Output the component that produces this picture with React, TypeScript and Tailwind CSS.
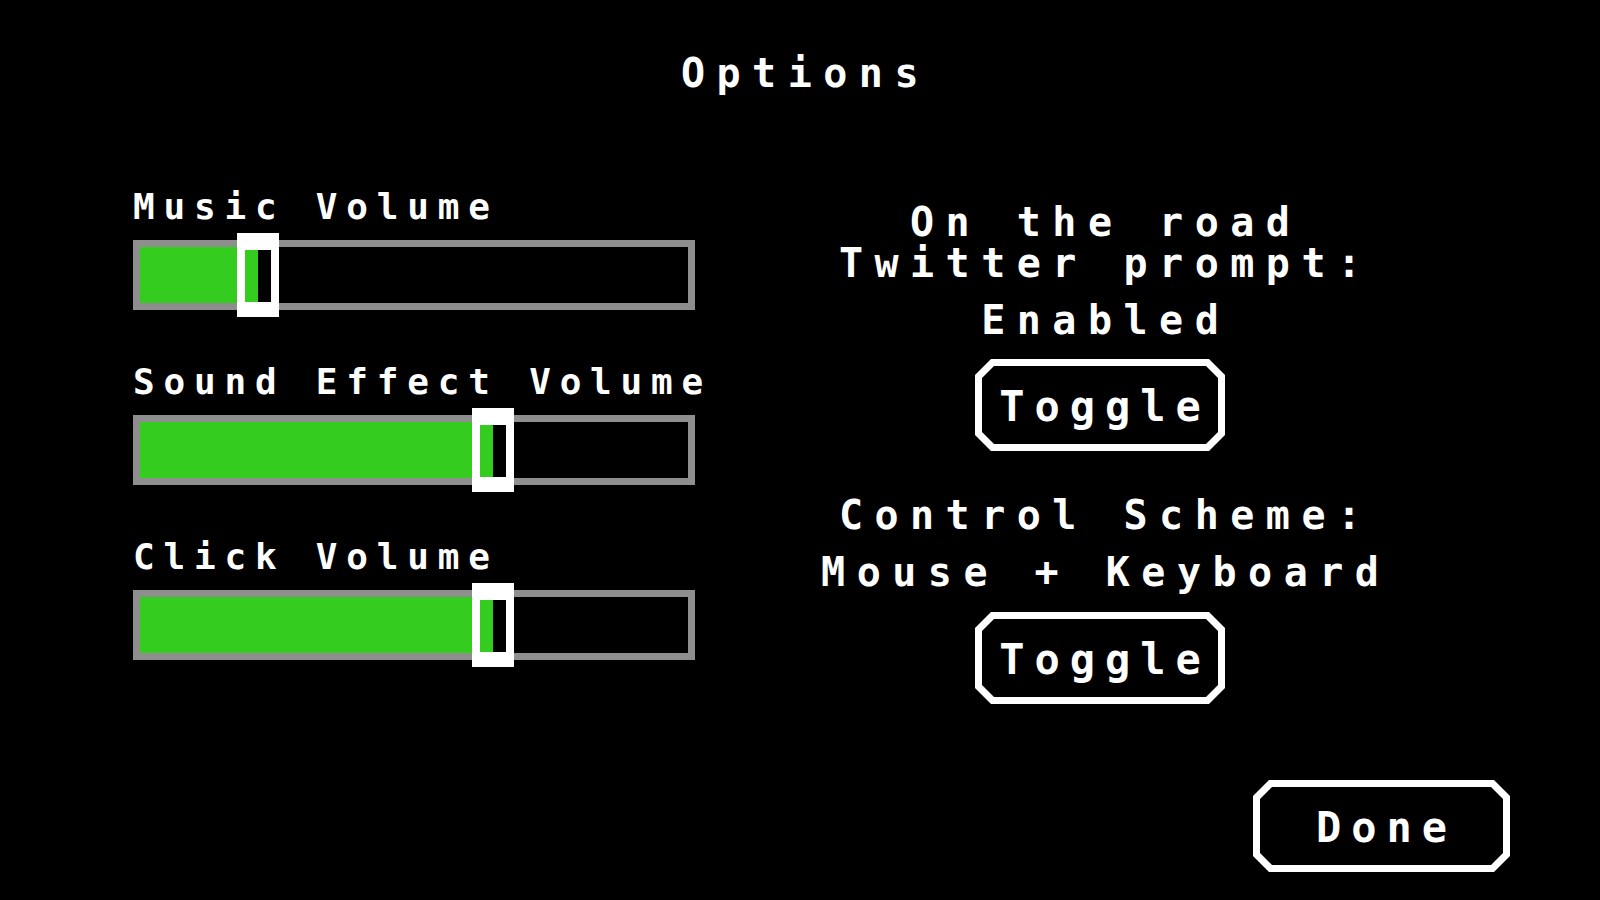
import React from "react";

const octagon =
  "[clip-path:polygon(16px_0,calc(100%-16px)_0,100%_16px,100%_calc(100%-16px),calc(100%-16px)_100%,16px_100%,0_calc(100%-16px),0_16px)]";
const octagonInner =
  "[clip-path:polygon(12px_0,calc(100%-12px)_0,100%_12px,100%_calc(100%-12px),calc(100%-12px)_100%,12px_100%,0_calc(100%-12px),0_12px)]";

function PixelButton({ label, width }: { label: string; width: string }) {
  return (
    <button className={`${octagon} ${width} h-[92px] bg-white p-[7px]`}>
      <div
        className={`${octagonInner} flex h-full w-full items-center justify-center bg-black pt-[4px] pl-[10px] text-[42px] leading-[42px] tracking-[10px] text-white`}
      >
        {label}
      </div>
    </button>
  );
}

function VolumeSlider({ label, value }: { label: string; value: number }) {
  return (
    <div className="flex flex-col">
      <div className="text-[36px] leading-[36px] tracking-[8.8px] whitespace-nowrap">{label}</div>
      <div className="relative mt-[15px] h-[70px] w-[562px] border-[7px] border-[#8e8e8e] bg-black">
        <div className="h-full bg-[#33cc1f]" style={{ width: `${value}%` }} />
        {/* hollow handle sitting on the end of the fill */}
        <div
          className="absolute top-[-14px] h-[84px] w-[42px] border-x-[8px] border-t-[17px] border-b-[15px] border-white"
          style={{ left: `calc(${value}% - 21px)` }}
        />
      </div>
    </div>
  );
}

export default function App() {
  return (
    <div
      className="flex h-[900px] w-full flex-col overflow-hidden bg-black font-bold text-white"
      style={{ fontFamily: '"DejaVu Sans Mono", "Liberation Mono", monospace' }}
    >
      <h1 className="pt-[53px] pl-[11px] text-center text-[40px] leading-[40px] tracking-[11.5px]">Options</h1>

      <div className="flex items-start">
        <div className="ml-[133px] mt-[96px] flex w-[562px] flex-col gap-[54px]">
          <VolumeSlider label="Music Volume" value={21.5} />
          <VolumeSlider label="Sound Effect Volume" value={64.4} />
          <VolumeSlider label="Click Volume" value={64.4} />
        </div>

        <div className="ml-[105px] mt-[109px] flex w-[600px] flex-col items-center text-[40px] tracking-[11.5px]">
          <div className="pl-[11.5px] text-center leading-[41px]">
            <div>On the road</div>
            <div>Twitter prompt:</div>
          </div>
          <div className="mt-[16px] pl-[11.5px] leading-[40px]">Enabled</div>
          <div className="mt-[19px]">
            <PixelButton label="Toggle" width="w-[250px]" />
          </div>
          <div className="mt-[44px] pl-[11.5px] leading-[40px] whitespace-nowrap">Control Scheme:</div>
          <div className="mt-[17px] pl-[11.5px] leading-[40px] whitespace-nowrap">Mouse + Keyboard</div>
          <div className="mt-[20px]">
            <PixelButton label="Toggle" width="w-[250px]" />
          </div>
        </div>
      </div>

      <div className="mt-auto mb-[28px] flex justify-end pr-[90px]">
        <PixelButton label="Done" width="w-[257px]" />
      </div>
    </div>
  );
}
